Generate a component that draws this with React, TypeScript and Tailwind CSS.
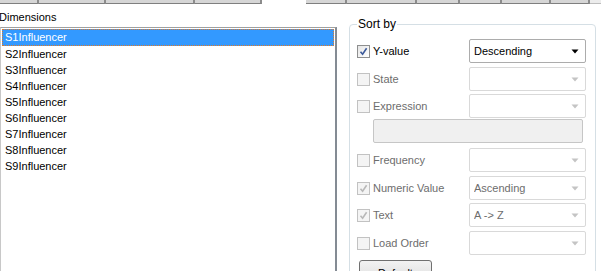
import React from "react";

const dimensions = [
  "S1Influencer",
  "S2Influencer",
  "S3Influencer",
  "S4Influencer",
  "S5Influencer",
  "S6Influencer",
  "S7Influencer",
  "S8Influencer",
  "S9Influencer",
];

// tab strip segments at the very top (cut off by the window)
const tabs = [
  { w: 39, gap: 0 },
  { w: 67, gap: 0 },
  { w: 89, gap: 0 },
  { w: 67, gap: 0 },
  { w: 41, gap: 44 },
  { w: 70, gap: 0 },
  { w: 43, gap: 0 },
  { w: 42, gap: 0 },
  { w: 49, gap: 0 },
  { w: 39, gap: 0 },
];

const Arrow = ({ disabled }: { disabled?: boolean }) => (
  <svg width="8" height="5" viewBox="0 0 8 5" className="shrink-0">
    <path d="M0.5 0.5 H7.5 L4 4.5 Z" fill={disabled ? "#c4c4c4" : "#000"} />
  </svg>
);

const Check = ({ disabled }: { disabled?: boolean }) => (
  <svg width="9" height="9" viewBox="0 0 9 9">
    <path
      d="M1.5 4.8 L3.6 7.2 L7.6 1.2"
      fill="none"
      stroke={disabled ? "#b8b8b8" : "#3c5a9a"}
      strokeWidth="1.6"
    />
  </svg>
);

const CheckBox = ({
  checked,
  disabled,
}: {
  checked?: boolean;
  disabled?: boolean;
}) => (
  <div
    className={`w-[13px] h-[13px] border flex items-center justify-center shrink-0 ${
      disabled
        ? "border-[#c2c2c2] bg-[#f4f4f4]"
        : "border-[#8e8f8f] bg-gradient-to-br from-[#e6e6e6] to-[#ffffff]"
    }`}
  >
    {checked && <Check disabled={disabled} />}
  </div>
);

const Dropdown = ({
  value,
  disabled,
}: {
  value?: string;
  disabled?: boolean;
}) => (
  <div
    className={`w-[117px] h-[24px] border rounded-[2px] bg-white flex items-center pl-[4px] pr-[6px] ${
      disabled ? "border-[#d9d9d9] text-[#6d6d6d]" : "border-[#acacac] text-black"
    }`}
  >
    <span className="flex-1 truncate">{value}</span>
    <Arrow disabled={disabled} />
  </div>
);

const SortRow = ({
  label,
  checked,
  disabled,
  value,
  selectDisabled,
  className,
}: {
  label: string;
  checked?: boolean;
  disabled?: boolean;
  value?: string;
  selectDisabled?: boolean;
  className?: string;
}) => (
  <div className={`flex items-center h-[24px] ${className ?? ""}`}>
    <div className="w-[112px] flex items-center gap-[3px]">
      <CheckBox checked={checked} disabled={disabled} />
      <span className={disabled ? "text-[#6d6d6d]" : "text-black"}>{label}</span>
    </div>
    <Dropdown value={value} disabled={selectDisabled} />
  </div>
);

const App = () => {
  return (
    <div className="w-[601px] h-[271px] overflow-hidden bg-white font-['Liberation_Sans',Arial,sans-serif] text-[11px] leading-none text-black">
      {/* tab strip */}
      <div className="flex h-[4px]">
        {tabs.map((t, i) => (
          <React.Fragment key={i}>
            {t.gap > 0 && <div style={{ width: t.gap }} className="shrink-0" />}
            <div
              style={{ width: t.w }}
              className="shrink-0 h-[4px] bg-[#d6d6d6] border-b border-b-[#7f7f7f] border-r-2 border-r-[#8c8c8c]"
            />
          </React.Fragment>
        ))}
        <div className="flex-1 h-[4px] bg-[#ececec] border-b border-b-[#bdbdbd]" />
      </div>

      <div className="flex">
        {/* Dimensions list */}
        <div className="w-[337px] shrink-0">
          <div className="h-[23px] flex items-end pb-[4px] -ml-[1px]">Dimensions</div>
          <div className="h-[260px] border-t border-t-[#a0a0a0] border-l border-l-[#c8c8c8] border-r-2 border-r-[#848b94] pt-[1px] px-[1px]">
            {dimensions.map((d, i) => (
              <div
                key={d}
                className={`h-[16px] flex items-center pl-[3px] ${
                  i === 0
                    ? "bg-[#3399ff] text-white outline-1 outline-dotted outline-[#e07a28] -outline-offset-1 h-[17px]"
                    : ""
                }`}
              >
                {d}
              </div>
            ))}
          </div>
        </div>

        {/* Sort by group */}
        <div className="flex-1 pl-[12px] pr-[5px] pt-[14px]">
          <fieldset className="border border-[#d5dfe5] rounded-[4px] pl-[7px] pb-[20px] h-[260px]">
            <legend className="px-[1px] ml-[0px] text-[12px] leading-[13px]">Sort by</legend>
            <div className="flex flex-col pt-[8px]">
              <SortRow label="Y-value" checked value="Descending" />
              <SortRow
                label="State"
                disabled
                selectDisabled
                className="mt-[4px]"
              />
              <SortRow
                label="Expression"
                disabled
                selectDisabled
                className="mt-[3px]"
              />
              <div className="ml-[16px] mt-[1px] w-[210px] h-[24px] border border-[#c6c6c6] bg-[#f0f0f0] rounded-[2px]" />
              <SortRow
                label="Frequency"
                disabled
                selectDisabled
                className="mt-[5px]"
              />
              <SortRow
                label="Numeric Value"
                checked
                disabled
                value="Ascending"
                selectDisabled
                className="mt-[4px]"
              />
              <SortRow
                label="Text"
                checked
                disabled
                value="A -> Z"
                selectDisabled
                className="mt-[3px]"
              />
              <SortRow
                label="Load Order"
                disabled
                selectDisabled
                className="mt-[4px]"
              />
              <button className="mt-[5px] ml-[2px] w-[73px] h-[23px] border border-[#707070] rounded-[3px] bg-gradient-to-b from-[#f2f2f2] to-[#dddddd] text-[11px] text-black flex items-start justify-center pt-[7px]">
                Default
              </button>
            </div>
          </fieldset>
        </div>
      </div>
    </div>
  );
};

export default App;
